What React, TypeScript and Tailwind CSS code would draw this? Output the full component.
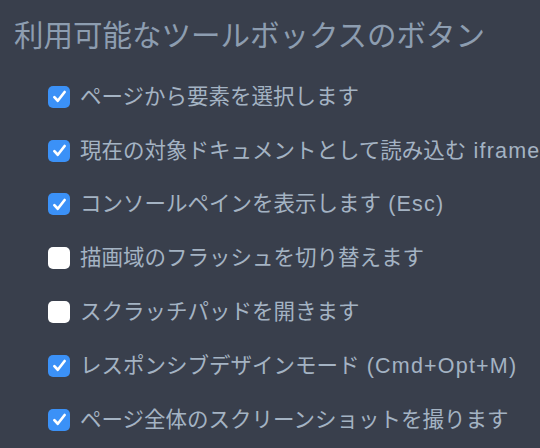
import React from "react";

const items: { label: string; latin?: string; checked: boolean }[] = [
  { label: "ページから要素を選択します", checked: true },
  { label: "現在の対象ドキュメントとして読み込む", latin: "iframe", checked: true },
  { label: "コンソールペインを表示します", latin: "(Esc)", checked: true },
  { label: "描画域のフラッシュを切り替えます", checked: false },
  { label: "スクラッチパッドを開きます", checked: false },
  { label: "レスポンシブデザインモード", latin: "(Cmd+Opt+M)", checked: true },
  { label: "ページ全体のスクリーンショットを撮ります", checked: true },
];

function Box({ checked }: { checked: boolean }) {
  if (checked) {
    return (
      <div className="w-[22px] h-[22px] rounded-[5px] bg-[#3b91f7] flex items-center justify-center shrink-0">
        <svg width="15" height="15" viewBox="0 0 14 14" fill="none">
          <path d="M2.2 7.6 L5.4 11 L11.8 2.8" stroke="white" strokeWidth="2.5" strokeLinecap="round" strokeLinejoin="round" />
        </svg>
      </div>
    );
  }
  return <div className="w-[22px] h-[22px] rounded-[5px] bg-white shrink-0" />;
}

export default function App() {
  return (
    <div
      className="w-[540px] h-[448px] bg-[#393f4c] overflow-hidden whitespace-nowrap"
      style={{ fontFamily: '"Liberation Sans", "Noto Sans CJK JP", sans-serif' }}
    >
      <div className="pl-[14px] pt-[16px] h-[70px] text-[29.5px] leading-[40px] text-[#8d9db0]">
        利用可能なツールボックスのボタン
      </div>
      <div className="flex flex-col pl-[48px]">
        {items.map((it, i) => (
          <div key={i} className="flex items-center h-[53.8px] gap-[10px] text-[21.5px] text-[#a4b3c3]">
            <Box checked={it.checked} />
            <span>
              {it.label}
              {it.latin ? <span className="tracking-[1.2px]"> {it.latin}</span> : null}
            </span>
          </div>
        ))}
      </div>
    </div>
  );
}
